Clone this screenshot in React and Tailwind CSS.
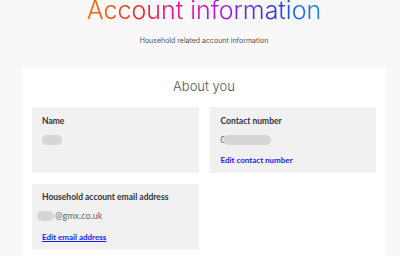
export default function App() {
  return (
    <div className="w-[400px] h-[256px] overflow-hidden bg-[#f8f8f8] flex flex-col items-center pl-[8px]" style={{ fontFamily: "Lato, 'Noto Sans', sans-serif" }}>
      <h1
        className="text-[25px] leading-[21px] font-light bg-clip-text text-transparent bg-[linear-gradient(90deg,#ff6a00_0%,#f4182f_25%,#e40fb8_45%,#8a1cf0_62%,#2e35ec_80%,#0a8cff_100%)]"
        style={{ fontFamily: "Inter, sans-serif" }}
      >
        Account information
      </h1>
      <p className="mt-[15px] text-[7px] leading-[10px] text-[#555]" style={{ fontFamily: "Inter, sans-serif" }}>
        Household related account information
      </p>
      <div className="mt-[21px] w-[364px] bg-white rounded-[2px] px-[10px] pb-[10px]">
        <div className="h-[40px] flex items-center justify-center">
          <span className="text-[13px] text-[#555] font-light" style={{ fontFamily: "Inter, sans-serif" }}>About you</span>
        </div>
        <div className="grid grid-cols-2 gap-[11px]">
          <div className="h-[66px] bg-[#f1f1f1] px-[10px] pt-[8px]">
            <div className="text-[8.5px] leading-[12px] font-bold text-[#333]">Name</div>
            <div className="mt-[8px] w-[20px] h-[10px] rounded-full bg-[#d6d6d6]"></div>
          </div>
          <div className="h-[66px] bg-[#f1f1f1] px-[11px] pt-[8px]">
            <div className="text-[8.5px] leading-[12px] font-bold text-[#333]">Contact number</div>
            <div className="mt-[8px] flex items-center text-[9px] leading-[10px] text-[#666]">
              <span>0</span>
              <span className="ml-[-3px] w-[48px] h-[10px] rounded-full bg-[#d6d6d6]"></span>
            </div>
            <div className="mt-[10px] text-[8px] leading-[10px] font-bold text-[#1a1aff]">Edit contact number</div>
          </div>
          <div className="h-[66px] bg-[#f1f1f1] px-[10px] pt-[7px]">
            <div className="text-[8.5px] leading-[12px] font-bold text-[#333]">Household account email address</div>
            <div className="mt-[8px] flex items-center text-[9px] leading-[10px] text-[#666]">
              <span className="ml-[-5px] w-[17px] h-[10px] rounded-full bg-[#d6d6d6]"></span>
              <span className="ml-[1px]">@gmx.co.uk</span>
            </div>
            <div className="mt-[11px] text-[8px] leading-[10px] font-bold text-[#1a1aff] underline">Edit email address</div>
          </div>
          <div></div>
        </div>
      </div>
    </div>
  );
}
